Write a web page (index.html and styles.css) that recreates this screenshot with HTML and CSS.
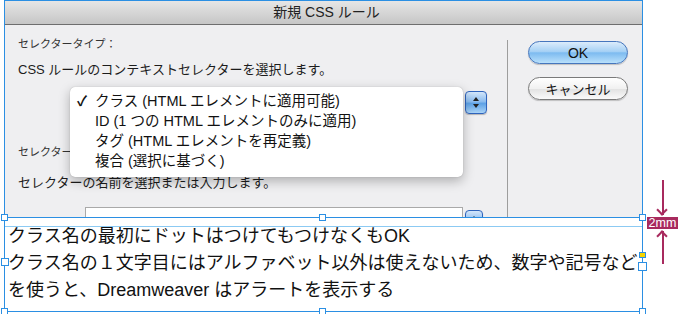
FILE: index.html
```
<!DOCTYPE html>
<html lang="ja">
<head>
    <meta charset="UTF-8">
    <title>新規 CSS ルール</title>
    <link rel="stylesheet" href="styles.css">
</head>
<body>
    <div class="page">
        <!-- Screenshot of the dialog -->
        <div class="shot">
            <div class="titlebar">新規 CSS ルール</div>
            <div class="dialog-body">
                <div class="main">
                    <p class="label">セレクタータイプ：</p>
                    <p class="desc">CSS ルールのコンテキストセレクターを選択します。</p>
                    <div class="select-row first">
                        <div class="field"></div>
                        <span class="stepper"><i class="up"></i><i class="down"></i></span>
                    </div>
                    <p class="label label-name">セレクター名：</p>
                    <p class="desc desc-name">セレクターの名前を選択または入力します。</p>
                    <div class="select-row second">
                        <div class="field"></div>
                        <span class="stepper"><i class="up"></i><i class="down"></i></span>
                    </div>

                    <ul class="popup">
                        <li class="checked">クラス (HTML エレメントに適用可能)</li>
                        <li>ID (1 つの HTML エレメントのみに適用)</li>
                        <li>タグ (HTML エレメントを再定義)</li>
                        <li>複合 (選択に基づく)</li>
                    </ul>
                </div>
                <div class="side">
                    <button class="btn btn-ok">OK</button>
                    <button class="btn">キャンセル</button>
                </div>
            </div>
        </div>

        <!-- Caption text frame -->
        <div class="frame">
            <div class="frame-text">
                <p>クラス名の最初にドットはつけてもつけなくもOK</p>
                <p>クラス名の１文字目にはアルファベット以外は使えないため、数字や記号など</p>
                <p>を使うと、Dreamweaver はアラートを表示する</p>
            </div>
            <span class="handle h-tl"></span>
            <span class="handle h-tc"></span>
            <span class="handle h-tr"></span>
            <span class="handle h-ml"></span>
            <span class="handle h-mr"></span>
            <span class="port"></span>
            <span class="handle h-bl"></span>
            <span class="handle h-bc"></span>
            <span class="handle h-br"></span>
        </div>

        <!-- 2mm annotation -->
        <div class="note">
            <span class="arrow arrow-down"></span>
            <span class="note-label">2mm</span>
            <span class="arrow arrow-up"></span>
        </div>
    </div>
</body>
</html>
```

FILE: styles.css
```
* {
    margin: 0;
    padding: 0;
    box-sizing: border-box;
}
html, body {
    width: 680px;
    height: 314px;
    background: #ffffff;
    overflow: hidden;
    font-family: "Liberation Sans", "Noto Sans CJK JP", sans-serif;
    color: #1a1a1a;
}
.page {
    position: relative;
    padding-left: 4px;
}
/* Dialog screenshot */
.shot {
    width: 639px;
    height: 217px;
    border: 1px solid #2b8fe3;
    border-bottom: none;
    background: #efeff1;
    overflow: hidden;
}
.titlebar {
    height: 24px;
    border-bottom: 1px solid #6e6e6e;
    background: linear-gradient(#e6e6e6, #c6c6c6);
    text-align: center;
    font-size: 14px;
    line-height: 23px;
    color: #222;
    padding-left: 6px;
}
.dialog-body {
    display: flex;
    height: 200px;
}
.main {
    position: relative;
    width: 502px;
    padding: 11px 0 0 13px;
}
.label {
    font-size: 11px;
    line-height: 16px;
    color: #333;
}
.desc {
    font-size: 13px;
    line-height: 18px;
    margin-top: 9px;
    color: #1c1c1c;
}
.label-name {
    margin-top: 30px;
}
.desc-name {
    margin-top: 14px;
}
.select-row {
    display: flex;
    align-items: flex-start;
    gap: 2px;
    margin-top: 12px;
    padding-left: 67px;
}
.select-row.second {
    margin-top: 15px;
}
.field {
    width: 378px;
    height: 23px;
    background: #fff;
    border: 1px solid #a9a9a9;
    border-bottom-color: #d0d0d0;
}
.stepper {
    position: relative;
    width: 22px;
    height: 23px;
    border: 1px solid #2f64bd;
    border-radius: 4px;
    background: linear-gradient(#d3e6fa, #8dbdef 45%, #5ea2e6 55%, #a9d3f7);
    box-shadow: 0 1px 1px rgba(0, 0, 0, 0.25);
}
.stepper i {
    position: absolute;
    left: 7px;
    width: 0;
    height: 0;
    border-left: 3px solid transparent;
    border-right: 3px solid transparent;
}
.stepper .up {
    top: 5px;
    border-bottom: 4px solid #222;
}
.stepper .down {
    top: 12px;
    border-top: 4px solid #222;
}
.second .stepper {
    width: 18px;
    margin-top: 3px;
}
.second .stepper i {
    left: 5px;
}
/* Popup menu over the select */
.popup {
    position: absolute;
    left: 65px;
    top: 62px;
    width: 393px;
    height: 90px;
    list-style: none;
    background: #fff;
    border-radius: 5px;
    padding: 4px 0 0 25px;
    box-shadow: 0 4px 12px rgba(0, 0, 0, 0.28), 0 0 1px rgba(0, 0, 0, 0.3);
    font-size: 14.5px;
    line-height: 20px;
    color: #111;
}
.popup li {
    position: relative;
    white-space: nowrap;
}
.checked::before {
    content: "✓";
    position: absolute;
    left: -18px;
    font-size: 14px;
    font-weight: bold;
}
/* Right button column */
.side {
    flex: 1;
    margin-top: 15px;
    border-left: 1px solid #9d9d9d;
    padding: 1px 0 0 20px;
    display: flex;
    flex-direction: column;
    gap: 13px;
}
.btn {
    width: 100px;
    height: 23px;
    border-radius: 12px;
    border: 1px solid #7a7a7a;
    background: linear-gradient(#ffffff, #f1f1f1 50%, #e2e2e2 52%, #fafafa);
    font-family: "Liberation Sans", "Noto Sans CJK JP", sans-serif;
    font-size: 13px;
    color: #111;
    box-shadow: 0 1px 1px rgba(0, 0, 0, 0.2);
}
.btn-ok {
    border-color: #4676bd;
    background: linear-gradient(#dcecfb, #a6d1f5 45%, #7dbbf0 52%, #b9e0fb);
    font-size: 14px;
}
/* Text frame */
.frame {
    position: relative;
    width: 639px;
    height: 95px;
    border: 1px solid #2b8fe3;
}
.frame::before {
    content: "";
    position: absolute;
    left: 0;
    right: 0;
    top: 8px;
    border-top: 1px solid #8ccaf3;
}
.frame-text {
    padding: 5px 0 0 3px;
    font-size: 18px;
    line-height: 27px;
    color: #111;
}
.frame-text p {
    white-space: nowrap;
}
.handle {
    position: absolute;
    width: 7px;
    height: 7px;
    background: #fff;
    border: 1px solid #2b8fe3;
}
.h-tl { left: -4px; top: -4px; }
.h-tc { left: 314px; top: -4px; }
.h-tr { right: -4px; top: -4px; }
.h-bl { left: -4px; bottom: -4px; }
.h-bc { left: 314px; bottom: -4px; }
.h-br { right: -4px; bottom: -4px; }
.h-ml { left: -4px; top: 40px; width: 8px; height: 8px; }
.h-mr { right: -5px; top: 44px; width: 9px; height: 9px; }
.port {
    position: absolute;
    right: -4px;
    top: 34px;
    width: 7px;
    height: 6px;
    background: #f7d400;
    border: 1px solid #2b8fe3;
}
/* 2mm annotation */
.note {
    position: absolute;
    left: 647px;
    top: 180px;
    width: 31px;
    display: flex;
    flex-direction: column;
    align-items: center;
}
.arrow {
    position: relative;
    width: 2px;
    background: #a82a5e;
}
.arrow-down {
    height: 35px;
}
.arrow-up {
    height: 33px;
    margin-top: 2px;
}
.arrow::after {
    content: "";
    position: absolute;
    left: -4px;
    width: 6px;
    height: 6px;
    border-right: 2px solid #a82a5e;
    border-bottom: 2px solid #a82a5e;
}
.arrow-down::after {
    bottom: 1px;
    transform: rotate(45deg);
}
.arrow-up::after {
    top: 1px;
    transform: rotate(-135deg);
}
.note-label {
    width: 31px;
    height: 12px;
    margin-top: 2px;
    background: #a82a5e;
    color: #fff;
    font-size: 12.5px;
    line-height: 12px;
    text-align: center;
}
```
